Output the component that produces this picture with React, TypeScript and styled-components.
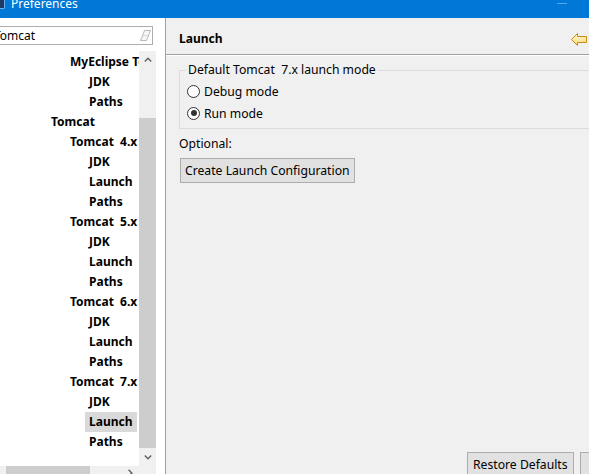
import React from "react";
import styled, { createGlobalStyle } from "styled-components";

const GlobalStyle = createGlobalStyle`
  html, body { margin: 0; padding: 0; background: #f0f0f0; }
  body {
    font-family: "Noto Sans", "Liberation Sans", sans-serif;
    font-size: 12px;
    color: #000;
    overflow: hidden;
  }
  * { box-sizing: border-box; }
`;

const Window = styled.div`
  width: 589px;
  height: 474px;
  overflow: hidden;
  display: flex;
  flex-direction: column;
  background: #f0f0f0;
`;

const TitleBar = styled.div`
  height: 18px;
  flex: none;
  background: #0078d7;
  display: flex;
  align-items: flex-start;
  overflow: hidden;
`;

const AppIcon = styled.div`
  width: 5px;
  height: 9px;
  background: #1e3a64;
  border-right: 1px solid #6fb0e8;
  border-bottom: 1px solid #6fb0e8;
  border-bottom-right-radius: 2px;
`;

const TitleText = styled.span`
  margin-left: 6px;
  margin-top: -2px;
  color: #fff;
  font-size: 12px;
  line-height: 12px;
`;

const MinGlyph = styled.span`
  margin-left: auto;
  margin-right: 22px;
  margin-top: 3px;
  width: 10px;
  height: 1px;
  background: #5aa8e6;
`;

const Body = styled.div`
  flex: 1;
  min-height: 0;
  display: flex;
`;

const LeftPane = styled.div`
  width: 166px;
  flex: none;
  background: #fff;
  border-right: 1px solid #a0a0a0;
  display: flex;
  flex-direction: column;
  overflow: hidden;
`;

const Search = styled.div`
  margin: 8px 0 0 -10px;
  width: 163px;
  height: 19px;
  flex: none;
  border: 1px solid #abadb3;
  display: flex;
  align-items: center;
  padding: 0 1px 0 3px;
  background: #fff;
`;

const SearchText = styled.span`
  flex: 1;
  line-height: 17px;
  white-space: nowrap;
`;

const TreeWrap = styled.div`
  margin-top: 6px;
  height: 415px;
  flex: none;
  display: flex;
`;

const TreeList = styled.div`
  width: 139px;
  flex: none;
  overflow: hidden;
  padding-top: 1px;
  background: #fff;
`;

const Row = styled.div`
  height: 20px;
  line-height: 20px;
  white-space: pre;
  font-weight: bold;
`;

const Label = styled.span<{ $level: number; $selected?: boolean }>`
  display: inline-block;
  margin-left: ${(p) => 47 + (p.$level - 1) * 19}px;
  padding: 0 4px;
  background: ${(p) => (p.$selected ? "#d9d9d9" : "transparent")};
`;

const VScroll = styled.div`
  width: 17px;
  flex: none;
  background: #f0f0f0;
  display: flex;
  flex-direction: column;
`;

const ArrowCell = styled.div`
  width: 17px;
  height: 17px;
  flex: none;
  display: flex;
  align-items: center;
  justify-content: center;
`;

const Track = styled.div`
  flex: 1;
  display: flex;
  flex-direction: column;
`;

const VThumb = styled.div`
  margin-top: 50px;
  height: 330px;
  background: #cdcdcd;
`;

const HScrollRow = styled.div`
  display: flex;
  height: 17px;
  flex: none;
`;

const HTrack = styled.div`
  width: 139px;
  background: #f0f0f0;
  display: flex;
`;

const HThumb = styled.div`
  margin-left: 6px;
  width: 84px;
  background: #cdcdcd;
`;

const HArrow = styled.div`
  margin-left: auto;
  width: 17px;
  display: flex;
  align-items: flex-start;
  justify-content: center;
  padding-top: 3px;
`;

const Corner = styled.div`
  width: 17px;
  background: #f0f0f0;
`;

const RightPane = styled.div`
  flex: 1;
  min-width: 0;
  display: flex;
  flex-direction: column;
  overflow: hidden;
  background: #f0f0f0;
  font-size: 12.2px;
`;

const Header = styled.div`
  height: 36px;
  flex: none;
  padding: 6px 2px 0 13px;
  display: flex;
  align-items: center;
  justify-content: space-between;
`;

const HeaderTitle = styled.span`
  font-weight: bold;
  font-size: 12px;
  line-height: 16px;
`;

const Rule = styled.div<{ $light?: boolean }>`
  height: 1px;
  flex: none;
  background: ${(p) => (p.$light ? "#ffffff" : "#a0a0a0")};
`;

const Content = styled.div`
  padding-left: 13px;
  display: flex;
  flex-direction: column;
  align-items: flex-start;
`;

const Group = styled.fieldset`
  align-self: stretch;
  margin: 6px -30px 0 0;
  padding: 2px 0 4px 6px;
  border: 1px solid #dcdcdc;
  min-width: 0;
`;

const Legend = styled.legend`
  padding: 0 2px;
  line-height: 16px;
  white-space: pre;
`;

const RadioRow = styled.label`
  height: 22px;
  display: flex;
  align-items: center;
  gap: 4px;
  padding-left: 1px;
`;

const RadioCircle = styled.span`
  width: 13px;
  height: 13px;
  border-radius: 50%;
  border: 1px solid #333;
  background: #fff;
  display: flex;
  align-items: center;
  justify-content: center;
`;

const RadioDot = styled.span`
  width: 6px;
  height: 6px;
  border-radius: 50%;
  background: #333;
`;

const Optional = styled.div`
  margin-top: 7px;
  line-height: 16px;
`;

const Button = styled.button`
  height: 25px;
  padding: 0 4px;
  border: 1px solid #adadad;
  background: #e1e1e1;
  font-family: inherit;
  font-size: inherit;
  color: #000;
  white-space: nowrap;
  flex: none;
`;

const CreateButton = styled(Button)`
  margin-top: 6px;
  margin-left: 1px;
`;

const ButtonBar = styled.div`
  margin-top: auto;
  height: 22px;
  flex: none;
  display: flex;
  gap: 6px;
  padding-left: 301px;
`;

const BarButton = styled(Button)`
  padding: 0 5px;
  min-width: 80px;
`;

const ChevronUp = () => (
  <svg width="8" height="5" viewBox="0 0 8 5">
    <polyline points="0.8,4.4 4,1.2 7.2,4.4" fill="none" stroke="#606060" strokeWidth="1.4" />
  </svg>
);

const ChevronDown = () => (
  <svg width="8" height="5" viewBox="0 0 8 5">
    <polyline points="0.8,0.6 4,3.8 7.2,0.6" fill="none" stroke="#606060" strokeWidth="1.4" />
  </svg>
);

const ChevronRight = () => (
  <svg width="5" height="8" viewBox="0 0 5 8">
    <polyline points="0.6,0.8 3.8,4 0.6,7.2" fill="none" stroke="#606060" strokeWidth="1.4" />
  </svg>
);

const EraserIcon = () => (
  <svg width="11" height="11" viewBox="0 0 11 11">
    <path d="M4.5 0.5 H10.5 L6.5 10.5 H0.5 Z" fill="#f6f6f6" stroke="#b9b9b9" strokeWidth="1" />
    <path d="M2.5 5.5 H8.5" stroke="#c8c8c8" strokeWidth="1" />
    <path d="M1 10 L3 5.5 H8" fill="none" stroke="#d8d8d8" strokeWidth="1" />
  </svg>
);

const BackArrow = () => (
  <svg width="16" height="13" viewBox="0 0 16 13">
    <defs>
      <linearGradient id="ba" x1="0" y1="0" x2="0" y2="1">
        <stop offset="0" stopColor="#fffbe0" />
        <stop offset="1" stopColor="#f6d66c" />
      </linearGradient>
    </defs>
    <path
      d="M0.5 6.5 L6.5 0.5 V3.5 H15.5 V9.5 H6.5 V12.5 Z"
      fill="url(#ba)"
      stroke="#c98a14"
      strokeWidth="1"
      strokeLinejoin="miter"
    />
  </svg>
);

type Item = { text: string; level: number; selected?: boolean };

const items: Item[] = [
  { text: "MyEclipse Tomcat", level: 2 },
  { text: "JDK", level: 3 },
  { text: "Paths", level: 3 },
  { text: "Tomcat", level: 1 },
  { text: "Tomcat  4.x", level: 2 },
  { text: "JDK", level: 3 },
  { text: "Launch", level: 3 },
  { text: "Paths", level: 3 },
  { text: "Tomcat  5.x", level: 2 },
  { text: "JDK", level: 3 },
  { text: "Launch", level: 3 },
  { text: "Paths", level: 3 },
  { text: "Tomcat  6.x", level: 2 },
  { text: "JDK", level: 3 },
  { text: "Launch", level: 3 },
  { text: "Paths", level: 3 },
  { text: "Tomcat  7.x", level: 2 },
  { text: "JDK", level: 3 },
  { text: "Launch", level: 3, selected: true },
  { text: "Paths", level: 3 },
];

export default function App() {
  return (
    <>
      <GlobalStyle />
      <Window>
        <TitleBar>
          <AppIcon />
          <TitleText>Preferences</TitleText>
          <MinGlyph />
        </TitleBar>
        <Body>
          <LeftPane>
            <Search>
              <SearchText>Tomcat</SearchText>
              <EraserIcon />
            </Search>
            <TreeWrap>
              <TreeList>
                {items.map((it, i) => (
                  <Row key={i}>
                    <Label $level={it.level} $selected={it.selected}>
                      {it.text}
                    </Label>
                  </Row>
                ))}
              </TreeList>
              <VScroll>
                <ArrowCell>
                  <ChevronUp />
                </ArrowCell>
                <Track>
                  <VThumb />
                </Track>
                <ArrowCell>
                  <ChevronDown />
                </ArrowCell>
              </VScroll>
            </TreeWrap>
            <HScrollRow>
              <HTrack>
                <HThumb />
                <HArrow>
                  <ChevronRight />
                </HArrow>
              </HTrack>
              <Corner />
            </HScrollRow>
          </LeftPane>
          <RightPane>
            <Header>
              <HeaderTitle>Launch</HeaderTitle>
              <BackArrow />
            </Header>
            <Rule />
            <Rule $light />
            <Content>
              <Group>
                <Legend>Default Tomcat  7.x launch mode</Legend>
                <RadioRow>
                  <RadioCircle />
                  Debug mode
                </RadioRow>
                <RadioRow>
                  <RadioCircle>
                    <RadioDot />
                  </RadioCircle>
                  Run mode
                </RadioRow>
              </Group>
              <Optional>Optional:</Optional>
              <CreateButton>Create Launch Configuration</CreateButton>
            </Content>
            <ButtonBar>
              <BarButton>Restore Defaults</BarButton>
              <BarButton>Apply</BarButton>
            </ButtonBar>
          </RightPane>
        </Body>
      </Window>
    </>
  );
}
